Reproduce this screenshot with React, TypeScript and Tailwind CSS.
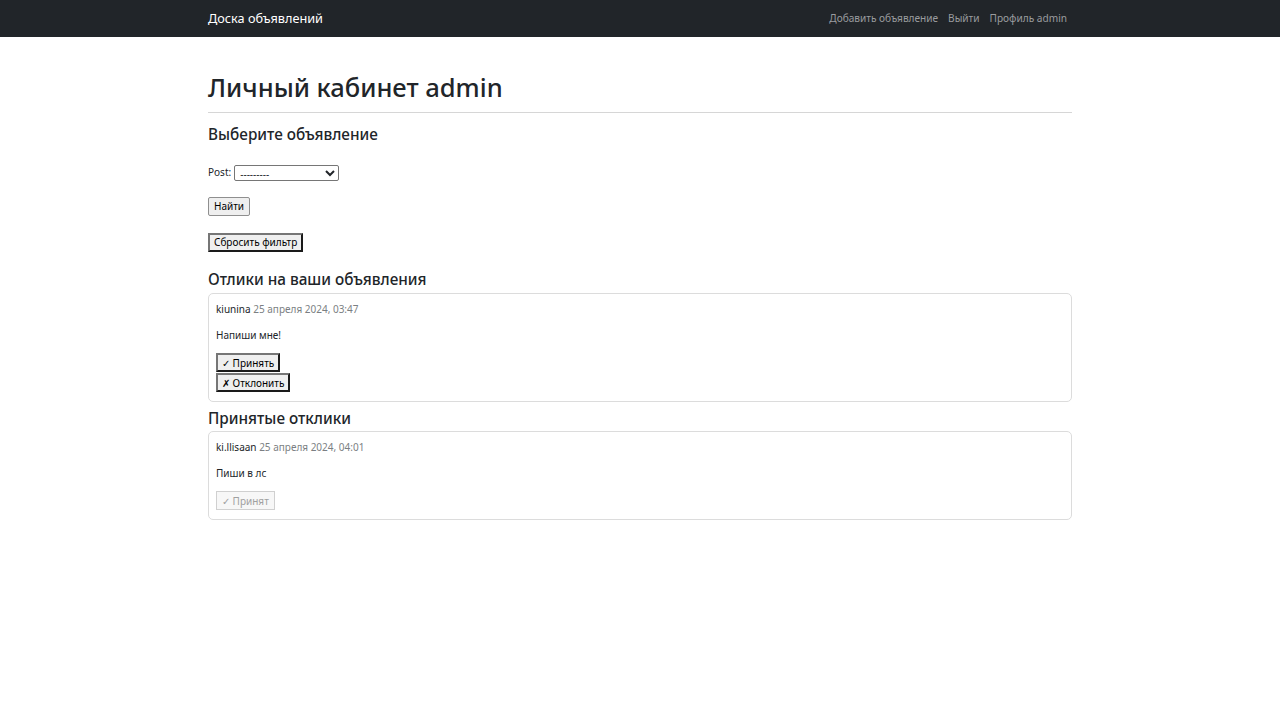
import React from "react";

const font = { fontFamily: '"Noto Sans", "Open Sans", sans-serif' };

function OutsetButton({ children, disabled }: { children: React.ReactNode; disabled?: boolean }) {
  if (disabled) {
    return (
      <button
        disabled
        className="h-[19px] px-[5px] text-[10px] leading-none text-[#a0a0a0] bg-[#f7f7f7] border border-[#d0d0d0]"
      >
        {children}
      </button>
    );
  }
  return (
    <button className="h-[19px] px-[4px] text-[10px] leading-none text-black bg-[#efefef] border-2 border-t-[#767676] border-l-[#767676] border-r-[#1a1a1a] border-b-[#1a1a1a]">
      {children}
    </button>
  );
}

export default function App() {
  return (
    <div className="min-h-[720px] bg-white text-[#212529]" style={font}>
      <nav className="h-[37px] bg-[#212529] flex items-center pt-[1px]">
        <div className="w-[864px] mx-auto flex items-center justify-between">
          <span className="text-white text-[12.7px]">Доска объявлений</span>
          <div className="flex items-center gap-[10px] text-[10.1px] text-[#9a9c9f] pr-[5px]">
            <span>Добавить объявление</span>
            <span>Выйти</span>
            <span>Профиль admin</span>
          </div>
        </div>
      </nav>
      <main className="w-[864px] mx-auto">
        <h1 className="text-[25.5px] font-medium leading-[32px] pt-[34px]">Личный кабинет admin</h1>
        <hr className="mt-[9px] border-t border-[#d6d6d6]" />
        <h4 className="text-[15.3px] font-medium leading-[20px] mt-[11px]">Выберите объявление</h4>
        <div className="mt-[20px] flex items-center text-[10px] h-[17px]">
          <span>Post:</span>
          <select className="ml-[3px] w-[105px] h-[16px] text-[10px] leading-none border border-[#767676] rounded-[2px] bg-white px-[1px]">
            <option>---------</option>
          </select>
        </div>
        <div className="mt-[11px]">
          <button className="h-[19px] px-[5px] text-[10px] leading-none bg-[#efefef] border border-[#8f8f8f] rounded-[2px] text-black">
            Найти
          </button>
        </div>
        <div className="mt-[12px]">
          <OutsetButton>Сбросить фильтр</OutsetButton>
        </div>
        <h4 className="text-[15.3px] font-medium leading-[20px] mt-[17px]">Отлики на ваши объявления</h4>
        <div className="mt-[4px] border border-[#dcdcdc] rounded-[5px] px-[7px] pt-[8px] pb-[9px]">
          <div className="text-[10px] leading-[14px]">
            <span>kiunina</span> <span className="text-[#7b7f83]">25 апреля 2024, 03:47</span>
          </div>
          <p className="text-[10px] leading-[14px] mt-[12px]">Напиши мне!</p>
          <div className="mt-[11px] flex flex-col items-start gap-[1px]">
            <OutsetButton>✓ Принять</OutsetButton>
            <OutsetButton>✗ Отклонить</OutsetButton>
          </div>
        </div>
        <h4 className="text-[15.3px] font-medium leading-[20px] mt-[6px]">Принятые отклики</h4>
        <div className="mt-[3px] border border-[#dcdcdc] rounded-[5px] px-[7px] pt-[8px] pb-[9px]">
          <div className="text-[10px] leading-[14px]">
            <span>ki.llisaan</span> <span className="text-[#7b7f83]">25 апреля 2024, 04:01</span>
          </div>
          <p className="text-[10px] leading-[14px] mt-[12px]">Пиши в лс</p>
          <div className="mt-[11px] flex flex-col items-start">
            <OutsetButton disabled>✓ Принят</OutsetButton>
          </div>
        </div>
      </main>
    </div>
  );
}
